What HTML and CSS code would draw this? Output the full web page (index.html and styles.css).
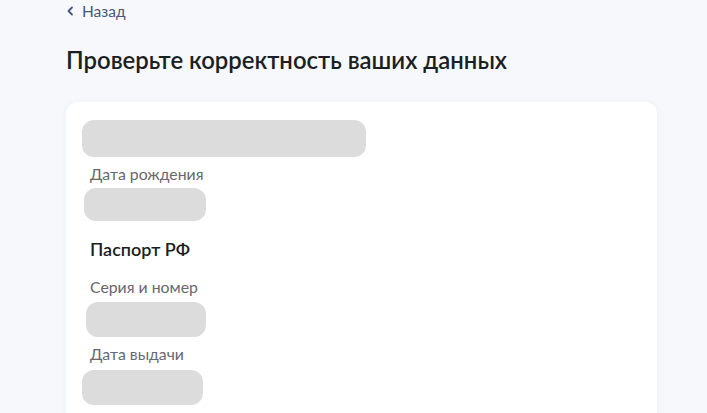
FILE: index.html
```html
<!DOCTYPE html>
<html lang="ru">
<head>
<meta charset="utf-8">
<link rel="stylesheet" href="styles.css">
</head>
<body>
<div class="page">
  <a class="back" href="#">
    <svg class="back-icon" width="8" height="10" viewBox="0 0 8 10"><path d="M6 1.5L2.5 5L6 8.5" fill="none" stroke="#45587d" stroke-width="1.8" stroke-linecap="round" stroke-linejoin="round"/></svg>
    <span>Назад</span>
  </a>
  <h1 class="title">Проверьте корректность ваших данных</h1>
  <div class="card">
    <div class="skel skel-name"></div>
    <div class="label l-birth">Дата рождения</div>
    <div class="skel skel-short s-birth"></div>
    <h2 class="section">Паспорт РФ</h2>
    <div class="label l-series">Серия и номер</div>
    <div class="skel skel-short s-series"></div>
    <div class="label l-issue">Дата выдачи</div>
    <div class="skel skel-short s-issue"></div>
  </div>
</div>
</body>
</html>
```

FILE: styles.css
```css
html, body {
  margin: 0;
  padding: 0;
  background: #f6f8fb;
  font-family: Lato, "Noto Sans", sans-serif;
  height: 100%;
  overflow: hidden;
}
.page {
  padding-left: 66px;
  width: 591px;
}
.back {
  display: flex;
  align-items: center;
  gap: 8px;
  height: 22px;
  color: #45587d;
  text-decoration: none;
  font-size: 15.5px;
  line-height: 22px;
}
.back-icon {
  display: block;
}
.title {
  margin: 23px 0 0 0;
  font-size: 23.9px;
  line-height: 30px;
  font-weight: 600;
  color: #1b1f24;
  letter-spacing: 0;
}
.card {
  margin-top: 27px;
  background: #ffffff;
  border-radius: 12px;
  box-shadow: 0 1px 6px rgba(120, 140, 180, 0.08);
  padding: 18px 16px 40px 16px;
  display: flex;
  flex-direction: column;
  align-items: flex-start;
}
.skel {
  background: #dcdcdc;
  border-radius: 12px;
}
.skel-name {
  width: 284px;
  height: 37px;
}
.skel-short {
  width: 122px;
  height: 34px;
}
.label {
  margin-left: 8px;
  font-size: 15.8px;
  line-height: 20px;
  color: #66696e;
}
.l-birth { margin-top: 7px; }
.s-birth { margin-top: 4px; margin-left: 2px; height: 33px; }
.section {
  margin: 16px 0 0 8px;
  font-size: 18px;
  line-height: 24px;
  font-weight: 600;
  color: #1b1f24;
}
.l-series { margin-top: 16px; }
.s-series { margin-top: 5px; margin-left: 4px; width: 120px; height: 35px; }
.l-issue { margin-top: 7px; }
.s-issue { margin-top: 6px; width: 121px; height: 35px; }
```
